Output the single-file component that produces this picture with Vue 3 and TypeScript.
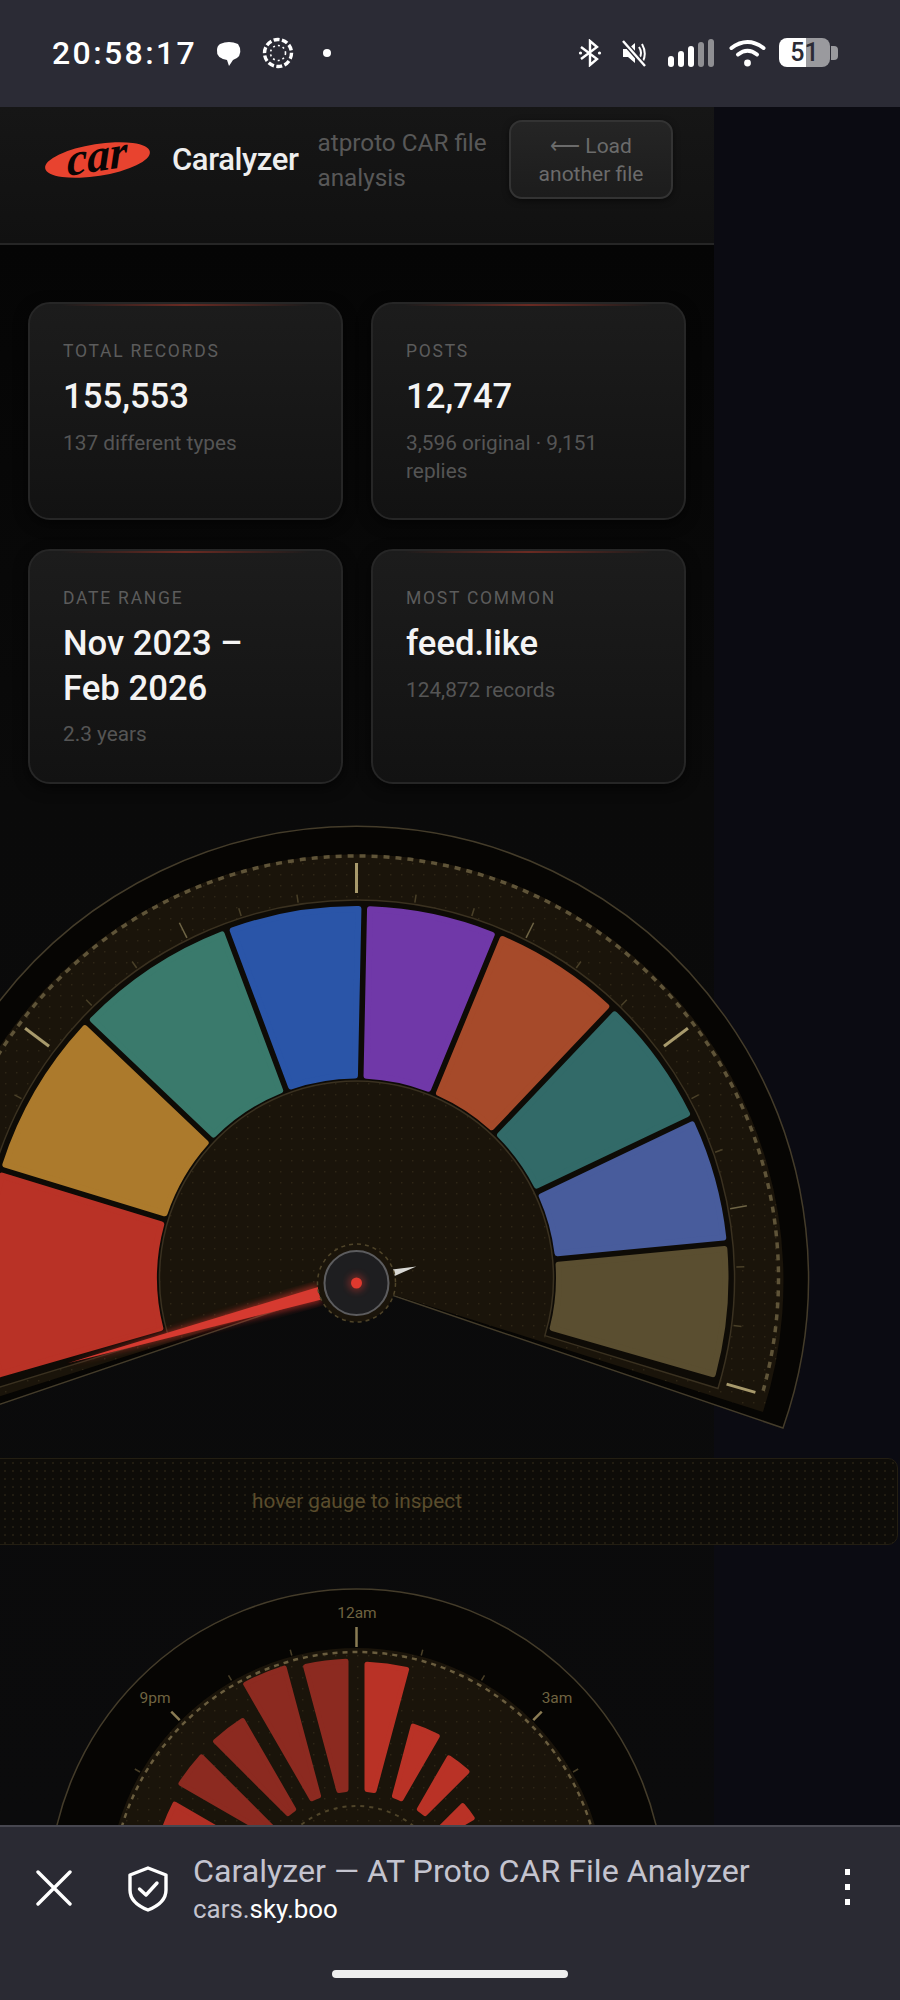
<script setup lang="ts">
interface Stat {
  label: string
  value: string[]
  sub: string
}
interface Seg {
  from: number
  to: number
  color: string
}

const stats: Stat[] = [
  { label: 'Total records', value: ['155,553'], sub: '137 different types' },
  { label: 'Posts', value: ['12,747'], sub: '3,596 original · 9,151 replies' },
  { label: 'Date range', value: ['Nov 2023 –', 'Feb 2026'], sub: '2.3 years' },
  { label: 'Most common', value: ['feed.like'], sub: '124,872 records' },
]

const CX = 356.5
const CY = 1278
const HOUR_CY = 1897

const pt = (cx: number, cy: number, r: number, deg: number) => {
  const a = (deg * Math.PI) / 180
  return `${(cx + r * Math.sin(a)).toFixed(2)} ${(cy - r * Math.cos(a)).toFixed(2)}`
}

// wedge with edges kept parallel: inset is a fixed distance, not a fixed angle
const wedge = (cx: number, cy: number, r0: number, r1: number, from: number, to: number, inset: number) => {
  const off = (r: number) => (Math.asin(inset / r) * 180) / Math.PI
  const large = to - from > 180 ? 1 : 0
  return [
    `M${pt(cx, cy, r1, from + off(r1))}`,
    `A${r1} ${r1} 0 ${large} 1 ${pt(cx, cy, r1, to - off(r1))}`,
    `L${pt(cx, cy, r0, to - off(r0))}`,
    `A${r0} ${r0} 0 ${large} 0 ${pt(cx, cy, r0, from + off(r0))}`,
    'Z',
  ].join(' ')
}

const arc = (cx: number, cy: number, r: number, from: number, to: number) =>
  `M${pt(cx, cy, r, from)} A${r} ${r} 0 ${to - from > 180 ? 1 : 0} 1 ${pt(cx, cy, r, to)}`

const segs: Seg[] = [
  { from: -106, to: -73, color: '#b93226' },
  { from: -73, to: -46.5, color: '#ac7a2c' },
  { from: -46.5, to: -20.5, color: '#3a7a6c' },
  { from: -20.5, to: 1.2, color: '#2a55a8' },
  { from: 1.2, to: 22.4, color: '#7038a8' },
  { from: 22.4, to: 43.5, color: '#a64a2a' },
  { from: 43.5, to: 64.5, color: '#326a68' },
  { from: 64.5, to: 84.6, color: '#485c9c' },
  { from: 84.6, to: 106, color: '#5a4e30' },
]
const segPaths = segs.map((s) => ({
  color: s.color,
  d: wedge(CX, CY, 202.5, 369, s.from, s.to, 5.8),
}))

const ticks = Array.from({ length: 25 }, (_, i) => {
  const deg = -106 + (i * 106) / 12
  const major = i % 6 === 0
  const mid = i % 3 === 0
  const r1 = major ? 415 : mid ? 397 : 388
  const r0 = major ? 385 : 380
  return {
    d: `M${pt(CX, CY, r0, deg)} L${pt(CX, CY, r1, deg)}`,
    color: major ? '#a89a6c' : mid ? '#6f6545' : '#4a4028',
    width: major ? 3 : 1.5,
  }
})

const hours: { deg: number; r: number; color: string }[] = [
  { deg: 0, r: 236, color: '#b93226' },
  { deg: 15, r: 183, color: '#b93226' },
  { deg: 30, r: 170, color: '#b93226' },
  { deg: 45, r: 143, color: '#b93226' },
  { deg: -15, r: 239, color: '#8c2a20' },
  { deg: -30, r: 243, color: '#8c2a20' },
  { deg: -45, r: 213, color: '#8c2a20' },
  { deg: -60, r: 212, color: '#8c2a20' },
  { deg: -75, r: 207, color: '#b03025' },
]
const hourPaths = hours.map((h) => ({
  color: h.color,
  d: wedge(CX, HOUR_CY, 108, h.r - 3, h.deg, h.deg + 15, 10.5),
}))

const hourTicks = Array.from({ length: 13 }, (_, i) => {
  const deg = -90 + i * 15
  const major = i % 3 === 0
  const r1 = deg === 0 ? 270 : major ? 262 : 256
  return {
    d: `M${pt(CX, HOUR_CY, 250, deg)} L${pt(CX, HOUR_CY, r1, deg)}`,
    color: major ? '#8a7c54' : '#4a4028',
    width: major ? 2.5 : 1.5,
  }
})
</script>

<template>
  <div class="phone">
    <div class="status">
      <span class="clock">20:58:17</span>
      <svg class="st-icon" width="26" height="26" viewBox="0 0 26 26">
        <path d="M4 4 Q13 0 22 4 L24 8 Q26 17 17 20 L13 26 L11 20 Q0 18 1 10 Q1 6 4 4Z" fill="#fff" />
      </svg>
      <svg class="st-icon ring" width="32" height="32" viewBox="0 0 32 32" fill="none" stroke="#fff">
        <circle cx="16" cy="16" r="13.5" stroke-width="3.4" stroke-dasharray="6 2.4" />
        <circle cx="16" cy="16" r="7.5" stroke-width="1.6" stroke-dasharray="2 3" />
      </svg>
      <span class="dot"></span>
      <span class="st-gap"></span>
      <svg width="24" height="28" viewBox="0 0 24 28" fill="none" stroke="#fff" stroke-width="2.4">
        <path d="M3 8 L19 20 L12 26 V2 L19 8 L3 20" />
        <circle cx="2.5" cy="14" r="1.6" fill="#fff" stroke="none" />
        <circle cx="21.5" cy="14" r="1.6" fill="#fff" stroke="none" />
      </svg>
      <svg class="mute" width="28" height="28" viewBox="0 0 28 28" fill="#fff">
        <path d="M3 10 H8 L15 4 V24 L8 18 H3Z" />
        <path d="M19 8 Q23 14 19 20 M22 5 Q27 14 23 22" fill="none" stroke="#fff" stroke-width="2" />
        <path d="M3 2 L25 27" stroke="#2b2b35" stroke-width="5" />
        <path d="M3 2 L25 27" stroke="#fff" stroke-width="2.4" />
      </svg>
      <svg class="signal" width="47" height="28" viewBox="0 0 47 28">
        <rect x="0" y="17" width="6" height="11" rx="3" fill="#fff" />
        <rect x="10" y="12" width="6" height="16" rx="3" fill="#fff" />
        <rect x="20" y="7" width="6" height="21" rx="3" fill="#fff" />
        <rect x="30" y="3" width="6" height="25" rx="3" fill="#8f8f93" />
        <rect x="40" y="0" width="6" height="28" rx="3" fill="#8f8f93" />
      </svg>
      <svg class="wifi" width="37" height="28" viewBox="0 0 37 28" fill="none" stroke="#fff" stroke-width="4" stroke-linecap="round">
        <path d="M2.5 9 Q18.5 -3 34.5 9" />
        <path d="M9 15.5 Q18.5 8 28 15.5" />
        <circle cx="18.5" cy="24" r="3.4" fill="#fff" stroke="none" />
      </svg>
      <div class="battery">
        <span class="batt-body">51</span>
        <span class="batt-tip"></span>
      </div>
    </div>

    <div class="page">
      <div class="column">
        <header class="header">
          <svg class="logo" width="105" height="38" viewBox="0 0 105 38">
            <ellipse cx="52.5" cy="19" rx="53" ry="16" transform="rotate(-9 52.5 19)" fill="#e8432f" />
            <text x="55" y="30" text-anchor="middle" transform="rotate(-9 52.5 19) skewX(-8)" class="logo-text">car</text>
          </svg>
          <h1 class="title">Caralyzer</h1>
          <p class="tagline">atproto CAR file analysis</p>
          <button class="back">⟵ Load another file</button>
        </header>

        <section class="stats">
          <div v-for="s in stats" :key="s.label" class="card">
            <div class="label">{{ s.label }}</div>
            <div class="value">
              <div v-for="line in s.value" :key="line">{{ line }}</div>
            </div>
            <div class="sub">{{ s.sub }}</div>
          </div>
        </section>

        <svg class="gauge" width="714" height="620" viewBox="0 820 714 620">
          <defs>
            <pattern id="dots" width="11" height="11" patternUnits="userSpaceOnUse">
              <rect x="5" y="5" width="1.4" height="1.4" fill="#2e2616" />
            </pattern>
            <filter id="glow" x="-20%" y="-50%" width="140%" height="200%">
              <feGaussianBlur stdDeviation="3" />
            </filter>
          </defs>
          <path d="M356.5 1283 L783 1428 A452 452 0 1 0 -70 1428Z" fill="#060503" stroke="#443c2a" stroke-width="1.5" />
          <path d="M356.5 1283 L763 1412 A427 427 0 1 0 -50 1412Z" fill="#1a140a" />
          <path d="M356.5 1283 L763 1412 A427 427 0 1 0 -50 1412Z" fill="url(#dots)" />
          <path :d="arc(CX, CY, 422, -105.5, 105.5)" fill="none" stroke="#5f5438" stroke-width="3.5" stroke-dasharray="6 6" />
          <path v-for="(t, i) in ticks" :key="i" :d="t.d" :stroke="t.color" :stroke-width="t.width" />
          <path :d="wedge(CX, CY, 197, 378, -107, 107, 0)" fill="#0e0b06" stroke="#3a3120" stroke-width="1.5" />
          <path v-for="s in segPaths" :key="s.color" :d="s.d" :fill="s.color" :stroke="s.color" stroke-width="6" stroke-linejoin="round" />
          <g transform="translate(356.5 1283) rotate(-105.5)">
            <path d="M-9 -38 L0 -300 L9 -38Z" fill="#e0392e" opacity=".6" filter="url(#glow)" />
            <path d="M-6.5 -38 L0 -300 L6.5 -38Z" fill="#d63a30" />
            <path d="M-3.5 38 L0 62 L3.5 38Z" fill="#d8d8d4" />
          </g>
          <circle cx="356.5" cy="1283" r="39" fill="#1a140a" stroke="#4f4429" stroke-width="1.5" stroke-dasharray="4 4" />
          <circle cx="356.5" cy="1283" r="32" fill="#1e1e20" stroke="#5c5c5e" stroke-width="2" />
          <circle cx="356.5" cy="1283" r="9" fill="#e0392e" opacity=".35" filter="url(#glow)" />
          <circle cx="356.5" cy="1283" r="5.5" fill="#e0392e" />
        </svg>

        <div class="readout">hover gauge to inspect</div>

        <svg class="gauge hours" width="714" height="260" viewBox="0 1585 714 260">
          <circle :cx="CX" :cy="HOUR_CY" r="308" fill="#060503" stroke="#443c2a" stroke-width="1.5" />
          <circle :cx="CX" :cy="HOUR_CY" r="249" fill="#1a140a" />
          <circle :cx="CX" :cy="HOUR_CY" r="249" fill="url(#dots)" />
          <circle :cx="CX" :cy="HOUR_CY" r="245" fill="none" stroke="#6a5d3e" stroke-width="2.5" stroke-dasharray="5 5" />
          <circle :cx="CX" :cy="HOUR_CY" r="91" fill="none" stroke="#4f4429" stroke-width="2" stroke-dasharray="4 5" />
          <path v-for="(t, i) in hourTicks" :key="i" :d="t.d" :stroke="t.color" :stroke-width="t.width" />
          <path v-for="h in hourPaths" :key="h.d" :d="h.d" :fill="h.color" :stroke="h.color" stroke-width="5" stroke-linejoin="round" />
          <text x="357" y="1618" text-anchor="middle" class="hour-label">12am</text>
          <text x="557" y="1703" text-anchor="middle" class="hour-label">3am</text>
          <text x="155" y="1703" text-anchor="middle" class="hour-label">9pm</text>
        </svg>
      </div>
    </div>

    <footer class="browser">
      <svg class="close" width="36" height="36" viewBox="0 0 36 36" stroke="#fff" stroke-width="3.4" stroke-linecap="round">
        <path d="M2 2 L34 34 M34 2 L2 34" />
      </svg>
      <svg class="shield" width="42" height="46" viewBox="0 0 42 46" fill="none" stroke="#fff" stroke-width="3.4" stroke-linejoin="round">
        <path d="M21 2 L39 9 V24 Q39 37 21 44 Q3 37 3 24 V9Z" />
        <path d="M12.5 23 L19 29 L30 17" stroke-linecap="round" />
      </svg>
      <div class="page-info">
        <div class="page-title">Caralyzer — AT Proto CAR File Analyzer</div>
        <div class="page-url">cars.<span>sky.boo</span></div>
      </div>
      <div class="kebab"><i></i><i></i><i></i></div>
      <div class="home"></div>
    </footer>
  </div>
</template>

<style scoped>
.phone {
  width: 900px;
  height: 2000px;
  display: flex;
  flex-direction: column;
  overflow: hidden;
  font-family: Roboto, 'Liberation Sans', sans-serif;
  background: #0b0b12;
}
.status {
  height: 107px;
  flex: none;
  display: flex;
  align-items: center;
  padding: 0 62px 2px 52px;
  box-sizing: border-box;
  background: #2b2b35;
  color: #fff;
}
.clock {
  font-size: 32px;
  font-weight: 500;
  letter-spacing: 2.4px;
  width: 164px;
}
.st-icon.ring {
  margin-left: 20px;
}
.dot {
  width: 8px;
  height: 8px;
  margin-left: 29px;
  border-radius: 50%;
  background: #fff;
}
.st-gap {
  flex: 1;
}
.mute {
  margin-left: 18px;
}
.signal {
  margin-left: 20px;
}
.wifi {
  margin-left: 14px;
}
.battery {
  margin-left: 13px;
  display: flex;
  align-items: center;
}
.batt-body {
  width: 51px;
  height: 29px;
  border-radius: 8px;
  background: linear-gradient(90deg, #fff 53%, #9a9a9e 53%);
  color: #2b2b35;
  font-size: 25px;
  font-weight: 500;
  line-height: 29px;
  text-align: center;
}
.batt-tip {
  width: 7px;
  height: 14px;
  margin-left: 1px;
  border-radius: 0 4px 4px 0;
  background: #9a9a9e;
}
.page {
  flex: 1;
  min-height: 0;
  overflow: hidden;
}
.column {
  width: 714px;
  height: 100%;
  background: linear-gradient(180deg, #050505 8%, #0a0a0a 40%, #0b0b0c 100%);
}
.header {
  height: 138px;
  box-sizing: border-box;
  display: flex;
  align-items: flex-start;
  padding: 13px 41px 0 45px;
  background: linear-gradient(180deg, #161616, #111);
  border-bottom: 2px solid #262626;
}
.logo {
  flex: none;
  margin-top: 21px;
  overflow: visible;
}
.title {
  margin: 21px 0 0 22px;
  font-size: 31px;
  line-height: 38px;
  font-weight: 500;
  letter-spacing: -0.4px;
  color: #eee;
}
.tagline {
  width: 180px;
  margin: 5px 0 0 19px;
  font-size: 24.3px;
  line-height: 35px;
  color: #585858;
}
.back {
  width: 164px;
  height: 79px;
  margin-left: auto;
  padding: 0 8px;
  font-family: inherit;
  font-size: 21px;
  line-height: 28px;
  color: #6b6b6b;
  background: linear-gradient(180deg, #252525, #1c1c1c);
  border: 2px solid #333;
  border-radius: 13px;
  box-shadow: 0 2px 6px rgba(0, 0, 0, 0.5);
}
.stats {
  display: grid;
  grid-template-columns: 315px 315px;
  grid-template-rows: 218px 235px;
  gap: 29px 28px;
  padding: 57px 0 0 28px;
}
.card {
  box-sizing: border-box;
  padding: 36px 33px 0;
  border: 2px solid #262626;
  border-radius: 22px;
  background:
    linear-gradient(90deg, transparent 10%, #6a2a22 50%, transparent 90%) top / 100% 2px no-repeat,
    linear-gradient(180deg, #1c1c1c, #121212);
  box-shadow: 0 4px 14px rgba(0, 0, 0, 0.6);
}
.label {
  font-size: 17.5px;
  line-height: 22px;
  letter-spacing: 1.75px;
  text-transform: uppercase;
  color: #5c5c5c;
}
.value {
  margin-top: 12px;
  font-size: 34.7px;
  line-height: 44.5px;
  font-weight: 500;
  color: #f4f4f4;
}
.sub {
  margin-top: 10px;
  font-size: 20.8px;
  line-height: 28px;
  color: #555;
}
.gauge {
  display: block;
  overflow: visible;
  margin-top: 36px;
}
.hours {
  margin-top: 40px;
}
.readout {
  box-sizing: border-box;
  width: 1082px;
  height: 87px;
  margin: 18px 0 0 -184px;
  border: 1px solid #231e12;
  border-radius: 10px;
  background-color: #0e0c08;
  background-image: radial-gradient(#211c11 1px, transparent 1.2px);
  background-size: 8px 8px;
  color: #5a4c2c;
  font-size: 20.8px;
  line-height: 85px;
  text-align: center;
}
.logo-text {
  font-family: 'Liberation Serif', serif;
  font-style: italic;
  font-weight: 700;
  font-size: 46px;
  fill: #0a0505;
}
.hour-label {
  font-family: Roboto, sans-serif;
  font-size: 15.5px;
  fill: #6f6340;
}
.browser {
  height: 175px;
  flex: none;
  box-sizing: border-box;
  display: flex;
  align-items: flex-start;
  padding: 37px 50px 0 36px;
  position: relative;
  background: #2a2a33;
  border-top: 2px solid #474750;
}
.close {
  margin-top: 6px;
  flex: none;
}
.shield {
  margin: 2px 0 0 55px;
  flex: none;
}
.page-info {
  margin-left: 24px;
  flex: 1;
  margin-top: -14px;
}
.page-title {
  font-size: 32.2px;
  line-height: 42px;
  color: #c4c4cf;
}
.page-url {
  font-size: 25.9px;
  line-height: 34px;
  color: #c4c4cf;
}
.page-url span {
  color: #fff;
}
.kebab {
  display: flex;
  flex-direction: column;
  gap: 9px;
  margin-top: 5px;
}
.kebab i {
  display: block;
  width: 5px;
  height: 6px;
  background: #fff;
}
.home {
  position: absolute;
  left: 332px;
  bottom: 22px;
  width: 236px;
  height: 8px;
  border-radius: 4px;
  background: #eee;
}
</style>
